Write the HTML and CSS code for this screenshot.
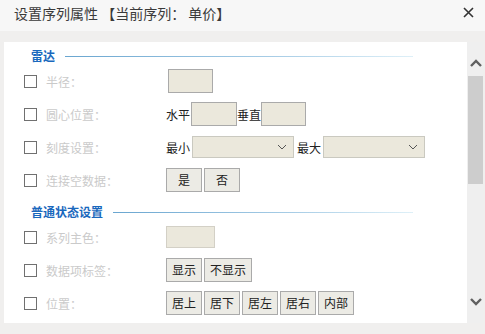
FILE: index.html
```html
<!DOCTYPE html>
<html lang="zh">
<head>
  <meta charset="UTF-8">
  <title>设置序列属性</title>
  <link rel="stylesheet" href="styles.css">
</head>
<body>

<div class="header">
  <div class="title">设置序列属性 【当前序列： 单价】</div>
  <svg class="close" width="11" height="11" viewBox="0 0 11 11"><path d="M1 1L10 10M10 1L1 10" stroke="#333" stroke-width="1.6"/></svg>
</div>

<div class="main">
  <div class="panel">
    <div class="heading"><span>雷达</span><div class="line"></div></div>

    <div class="row">
      <span class="check"></span><span class="label">半径：</span>
      <div class="ctrl"><div class="input shift"></div></div>
    </div>

    <div class="row">
      <span class="check"></span><span class="label">圆心位置：</span>
      <div class="ctrl">水平<div class="input wide"></div>垂直<div class="input"></div></div>
    </div>

    <div class="row">
      <span class="check"></span><span class="label">刻度设置：</span>
      <div class="ctrl">最小<div class="select"><svg width="10" height="6" viewBox="0 0 10 6"><path d="M1 1L5 5L9 1" fill="none" stroke="#555" stroke-width="1"/></svg></div><span class="gap">最大</span><div class="select"><svg width="10" height="6" viewBox="0 0 10 6"><path d="M1 1L5 5L9 1" fill="none" stroke="#555" stroke-width="1"/></svg></div></div>
    </div>

    <div class="row">
      <span class="check"></span><span class="label">连接空数据：</span>
      <div class="ctrl"><button>是</button><button>否</button></div>
    </div>

    <div class="heading second"><span>普通状态设置</span><div class="line"></div></div>

    <div class="row">
      <span class="check"></span><span class="label">系列主色：</span>
      <div class="ctrl"><div class="input color"></div></div>
    </div>

    <div class="row">
      <span class="check"></span><span class="label">数据项标签：</span>
      <div class="ctrl"><button>显示</button><button>不显示</button></div>
    </div>

    <div class="row">
      <span class="check"></span><span class="label">位置：</span>
      <div class="ctrl"><button>居上</button><button>居下</button><button>居左</button><button>居右</button><button>内部</button></div>
    </div>
  </div>

  <div class="scrollbar">
    <div class="arrow up"><svg width="12" height="8" viewBox="0 0 12 8"><path d="M1 7L6 2L11 7" fill="none" stroke="#606060" stroke-width="2.4"/></svg></div>
    <div class="thumb"></div>
    <div class="track"></div>
    <div class="arrow down"><svg width="12" height="8" viewBox="0 0 12 8"><path d="M1 1L6 6L11 1" fill="none" stroke="#606060" stroke-width="2.4"/></svg></div>
  </div>
</div>

</body>
</html>
```

FILE: styles.css
```css
body { margin: 0; background: #f0efee; font-family: "Noto Sans CJK SC", "Liberation Sans", sans-serif; font-size: 12px; color: #222; width: 485px; height: 334px; overflow: hidden; }
.header { height: 31px; background: #f7f7f7; display: flex; justify-content: space-between; align-items: flex-start; padding: 3px 11px 0 14px; box-sizing: border-box; }
.title { font-size: 14px; line-height: 20px; color: #3a3a3a; }
.close { margin-top: 4px; }
.main { display: flex; padding: 11px 2px 0 4px; height: 281px; }
.panel { width: 463px; background: #fff; padding-top: 6px; box-sizing: border-box; overflow: hidden; }
.heading { display: flex; align-items: center; height: 16px; padding-left: 27px; margin-right: 54px; color: #1a68bd; font-weight: bold; line-height: 16px; }
.heading.second { margin-top: 12px; }
.line { flex: 1; height: 1px; margin-left: 10px; background: linear-gradient(to right, #6aa6d0, #a8cde6 60%, #def0f8); }
.row { display: flex; align-items: center; height: 24px; margin-top: 9px; padding-left: 20px; }
.heading + .row { margin-top: 5px; }
.check { width: 11px; height: 11px; border: 1px solid #707070; }
.label { width: 120px; margin-left: 9px; color: #cacaca; }
.ctrl { display: flex; align-items: center; }
.input { width: 43px; height: 22px; background: #ebe8dc; border: 1px solid #aaa; }
.input.shift { margin-left: 2px; }
.input.wide { width: 44px; margin-left: 1px; }
.input.color { width: 47px; height: 20px; border-color: #d3d0c6; }
.select { width: 102px; height: 22px; background: #ebe8dc; border: 1px solid #cac9c0; margin-left: 2px; display: flex; align-items: center; justify-content: flex-end; padding-right: 6px; box-sizing: border-box; }
.gap { margin-left: 3px; }
button { font-family: inherit; font-size: 12px; color: #222; background: #ecebe5; border: 1px solid #aaa; height: 24px; min-width: 36px; padding: 0 5px; margin-right: 2px; line-height: 20px; }
.scrollbar { width: 16px; display: flex; flex-direction: column; align-items: flex-end; background: #efefef; }
.arrow { width: 15px; height: 34px; display: flex; justify-content: center; align-items: center; box-sizing: border-box; }
.arrow.up { padding-top: 8px; }
.arrow.down { padding-bottom: 8px; }
.thumb { width: 15px; height: 108px; background: #cdcdcd; }
.track { flex: 1; }
```
